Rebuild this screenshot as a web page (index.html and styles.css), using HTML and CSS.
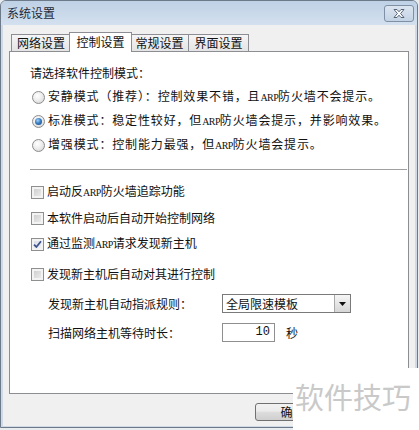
FILE: index.html
```html
<!DOCTYPE html>
<html lang="zh-CN">
<head>
<meta charset="utf-8">
<title>系统设置</title>
<link rel="stylesheet" href="styles.css">
</head>
<body>
<div class="window">
  <div class="titlebar">
    <span class="title">系统设置</span>
    <span class="close">
      <svg width="18" height="11" viewBox="0 0 18 11"><path d="M4 1.5 L7 1.5 L9 3.8 L11 1.5 L14 1.5 L10.6 5.5 L14 9.5 L11 9.5 L9 7.2 L7 9.5 L4 9.5 L7.4 5.5 Z" fill="#fdfdfd" stroke="#56667a" stroke-width="1" stroke-linejoin="round"/></svg>
    </span>
  </div>
  <div class="body">
    <div class="tabs">
      <div class="tab first">网络设置</div>
      <div class="tab active">控制设置</div>
      <div class="tab">常规设置</div>
      <div class="tab last">界面设置</div>
    </div>
    <div class="panel">
      <div class="heading">请选择软件控制模式：</div>
      <div class="radio-row"><span class="radio"></span><span class="rlabel">安静模式（推荐）：控制效果不错，且<span class="arp">ARP</span>防火墙不会提示。</span></div>
      <div class="radio-row"><span class="radio on"></span><span class="rlabel">标准模式：稳定性较好，但<span class="arp">ARP</span>防火墙会提示，并影响效果。</span></div>
      <div class="radio-row"><span class="radio"></span><span class="rlabel">增强模式：控制能力最强，但<span class="arp">ARP</span>防火墙会提示。</span></div>
      <div class="sep"></div>
      <div class="check-row"><span class="cb"></span><span class="clabel">启动反<span class="arp">ARP</span>防火墙追踪功能</span></div>
      <div class="check-row"><span class="cb"></span><span class="clabel">本软件启动后自动开始控制网络</span></div>
      <div class="check-row"><span class="cb on"><svg width="9" height="9" viewBox="0 0 9 9"><path d="M1 4.6 L3.4 7 L8 1.2" fill="none" stroke="#3d5390" stroke-width="1.8"/></svg></span><span class="clabel">通过监测<span class="arp">ARP</span>请求发现新主机</span></div>
      <div class="check-row gap"><span class="cb"></span><span class="clabel">发现新主机后自动对其进行控制</span></div>
      <div class="field-row combo-row">
        <span class="flabel">发现新主机自动指派规则：</span>
        <span class="combo"><span class="combo-text">全局限速模板</span><span class="combo-btn"><svg width="7" height="4" viewBox="0 0 7 4"><path d="M0 0 L7 0 L3.5 4 Z" fill="#111"/></svg></span></span>
      </div>
      <div class="field-row input-row">
        <span class="flabel">扫描网络主机等待时长：</span>
        <span class="input">10</span>
        <span class="unit">秒</span>
      </div>
    </div>
    <div class="buttons">
      <span class="btn">确定</span>
    </div>
  </div>
  <div class="watermark">软件技巧</div>
</div>
</body>
</html>
```
FILE: styles.css
```css
* { box-sizing: border-box; }
html, body { margin: 0; padding: 0; background: #e9ecef; }
body {
  width: 419px;
  height: 430px;
  overflow: hidden;
  font-family: "Noto Sans CJK SC", "Liberation Sans", sans-serif;
  font-size: 12px;
  color: #111;
}
.window {
  position: relative;
  width: 418px;
  height: 428px;
  border: 1px solid #6c7a8a;
  border-top-left-radius: 6px;
  border-top-right-radius: 6px;
  background: #cfdae6;
  padding: 0 2px 1px 2px;
  display: flex;
  flex-direction: column;
}
.titlebar {
  height: 24px;
  margin: 0 -2px;
  padding: 0 3px 0 6px;
  display: flex;
  align-items: center;
  justify-content: space-between;
  background: linear-gradient(#bfd1e6, #d3e0ee);
  border-top-left-radius: 5px;
  border-top-right-radius: 5px;
}
.title {
  color: #1e2a38;
  font-size: 12px;
  line-height: 14px;
}
.close {
  width: 30px;
  height: 17px;
  border: 1px solid #7f90a6;
  border-radius: 3px;
  background: linear-gradient(#dbe5f0, #c4d3e4);
  display: flex;
  align-items: center;
  justify-content: center;
}
.body {
  flex: 1;
  background: #f0f0f0;
  padding: 7px 5px 0 6px;
  display: flex;
  flex-direction: column;
}
.tabs {
  display: flex;
  align-items: flex-end;
  height: 19px;
  padding-left: 2px;
  position: relative;
  z-index: 1;
}
.tab {
  height: 17px;
  border: 1px solid #8c8e94;
  border-bottom: none;
  margin-left: -1px;
  background: linear-gradient(#f5f5f5, #e4e4e4);
  display: flex;
  align-items: center;
  justify-content: center;
  line-height: 14px;
  font-size: 12px;
}
.tab.first { width: 60px; margin-left: 0; }
.tab:nth-child(3) { width: 59px; }
.tab.last { width: 61px; }
.tab.active {
  width: 63px;
  height: 20px;
  margin-left: -2px;
  margin-right: -1px;
  margin-bottom: -1px;
  background: #fff;
  padding-bottom: 2px;
  position: relative;
  z-index: 2;
}
.panel {
  width: 400px;
  height: 343px;
  border: 1px solid #8c8e94;
  background: #fff;
  padding: 13px 0 0 20px;
  display: flex;
  flex-direction: column;
}
.heading {
  height: 16px;
  line-height: 16px;
  margin-bottom: 4px;
}
.radio-row {
  height: 24px;
  display: flex;
  align-items: center;
  padding-left: 2px;
}
.radio {
  width: 13px;
  height: 13px;
  flex: none;
  border-radius: 50%;
  border: 1px solid #8b8c8d;
  background: radial-gradient(circle at 40% 35%, #ffffff 0%, #eeeeee 45%, #cfcfcf 100%);
  display: flex;
  align-items: center;
  justify-content: center;
}
.radio.on::after {
  content: "";
  width: 7px;
  height: 7px;
  border-radius: 50%;
  background: radial-gradient(circle at 40% 35%, #a6d3f7 0%, #3a7fc4 45%, #123e73 100%);
}
.rlabel {
  margin-left: 3px;
  letter-spacing: 0.85px;
  line-height: 16px;
  white-space: nowrap;
}
.arp {
  font-family: "Liberation Serif", serif;
  font-size: 10px;
  letter-spacing: -0.6px;
}
.sep {
  height: 1px;
  margin: 12px 0 9px 0;
  background: #a0a0a0;
  width: 377px;
}
.check-row {
  height: 26px;
  display: flex;
  align-items: center;
  padding-left: 1px;
}
.check-row.gap { margin-top: 4px; }
.cb {
  width: 13px;
  height: 13px;
  flex: none;
  border: 1px solid #8e8f8f;
  background: linear-gradient(135deg, #c8c8c8, #f2f2f2);
  box-shadow: inset 0 0 0 2px #f3f3f3;
  display: flex;
  align-items: center;
  justify-content: center;
}
.cb.on { background: linear-gradient(135deg, #d4dae4, #f4f4f4); }
.clabel {
  margin-left: 3px;
  line-height: 16px;
  white-space: nowrap;
}
.field-row {
  height: 19px;
  display: flex;
  align-items: center;
  padding-left: 18px;
}
.combo-row { margin-top: 7px; }
.input-row { margin-top: 10px; }
.flabel {
  width: 174px;
  flex: none;
  line-height: 16px;
}
.combo {
  width: 129px;
  height: 19px;
  border: 1px solid #7a7a7a;
  background: #fff;
  display: flex;
  align-items: stretch;
}
.combo-text {
  flex: 1;
  padding-left: 3px;
  line-height: 17px;
}
.combo-btn {
  width: 16px;
  border-left: 1px solid #a9a9a9;
  background: linear-gradient(#f6f6f6, #d6d6d6);
  display: flex;
  align-items: center;
  justify-content: center;
}
.input {
  width: 53px;
  height: 19px;
  border: 1px solid #8f8f8f;
  background: #fff;
  text-align: right;
  padding-right: 4px;
  line-height: 17px;
  font-family: "Liberation Mono", monospace;
  font-size: 12px;
}
.unit { margin-left: 11px; line-height: 16px; }
.buttons {
  display: flex;
  margin-top: 9px;
  padding-left: 246px;
}
.btn {
  width: 75px;
  height: 18px;
  border: 1px solid #707070;
  border-radius: 3px;
  background: linear-gradient(#f2f2f2 0%, #ebebeb 45%, #dddddd 50%, #cfcfcf 100%);
  display: flex;
  align-items: center;
  justify-content: center;
  line-height: 14px;
}
.watermark {
  position: absolute;
  left: 292px;
  top: 367px;
  width: 127px;
  height: 63px;
  background: #fff;
  color: #c9c9c9;
  font-size: 29px;
  line-height: 56px;
  padding-left: 2px;
  white-space: nowrap;
}
```
